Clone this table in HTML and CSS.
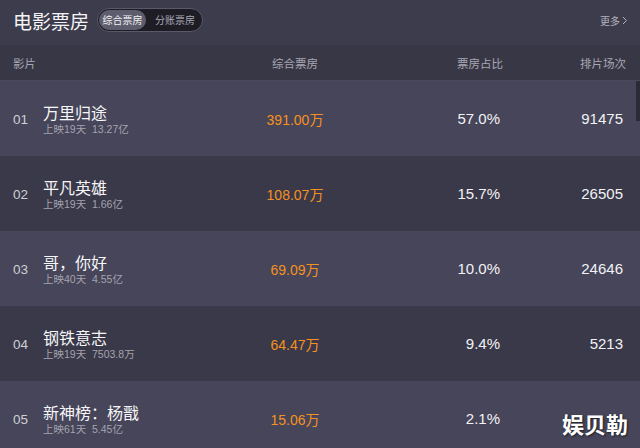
FILE: index.html
```html
<!DOCTYPE html>
<html lang="zh">
<head>
<meta charset="utf-8">
<link rel="stylesheet" href="styles.css">
</head>
<body>
<div class="page">
  <header class="top">
    <h1 class="title">电影票房</h1>
    <div class="pill">
      <span class="seg active">综合票房</span>
      <span class="seg">分账票房</span>
    </div>
    <a class="more">更多<svg width="6" height="9" viewBox="0 0 6 9"><path d="M1 1l3.5 3.5L1 8" fill="none" stroke="#b4b3bd" stroke-width="1"/></svg></a>
  </header>
  <div class="thead">
    <span class="c-rank">影片</span>
    <span class="c-film"></span>
    <span class="c-box">综合票房</span>
    <span class="c-pct">票房占比</span>
    <span class="c-cnt">排片场次</span>
  </div>
  <div class="tbody">
    <div class="row light">
      <span class="c-rank">01</span>
      <div class="c-film"><div class="name">万里归途</div><div class="sub">上映19天&nbsp;&nbsp;13.27亿</div></div>
      <span class="c-box val">391.00万</span>
      <span class="c-pct">57.0%</span>
      <span class="c-cnt">91475</span>
    </div>
    <div class="row dark">
      <span class="c-rank">02</span>
      <div class="c-film"><div class="name">平凡英雄</div><div class="sub">上映19天&nbsp;&nbsp;1.66亿</div></div>
      <span class="c-box val">108.07万</span>
      <span class="c-pct">15.7%</span>
      <span class="c-cnt">26505</span>
    </div>
    <div class="row light">
      <span class="c-rank">03</span>
      <div class="c-film"><div class="name">哥，你好</div><div class="sub">上映40天&nbsp;&nbsp;4.55亿</div></div>
      <span class="c-box val">69.09万</span>
      <span class="c-pct">10.0%</span>
      <span class="c-cnt">24646</span>
    </div>
    <div class="row dark">
      <span class="c-rank">04</span>
      <div class="c-film"><div class="name">钢铁意志</div><div class="sub">上映19天&nbsp;&nbsp;7503.8万</div></div>
      <span class="c-box val">64.47万</span>
      <span class="c-pct">9.4%</span>
      <span class="c-cnt">5213</span>
    </div>
    <div class="row light">
      <span class="c-rank">05</span>
      <div class="c-film"><div class="name">新神榜：杨戬</div><div class="sub">上映61天&nbsp;&nbsp;5.45亿</div></div>
      <span class="c-box val">15.06万</span>
      <span class="c-pct">2.1%</span>
      <span class="c-cnt"></span>
    </div>
  </div>
  <div class="thumb"></div>
  <div class="wm">娱贝勒</div>
</div>
</body>
</html>
```
FILE: styles.css
```css
* { box-sizing: border-box; }
html, body { margin: 0; padding: 0; }
body {
  width: 640px; height: 448px; overflow: hidden;
  background: #3c3b4b;
  font-family: "Liberation Sans", "Noto Sans CJK SC", sans-serif;
  color: #eeeef2;
}
.page { position: relative; width: 640px; height: 448px; overflow: hidden; }

.top {
  height: 45px;
  display: flex; align-items: center;
  padding: 0 12px 0 13px;
  background: #3d3c4c;
}
.title {
  margin: 0; font-size: 19px; font-weight: normal; color: #f4f4f6;
  font-family: "Noto Sans CJK SC", sans-serif; line-height: 1;
  margin-top: -5px;
}
.pill {
  margin-left: 8px; margin-top: -5px;
  display: flex; align-items: center;
  height: 24px; width: 106px;
  padding: 0 1px;
  background: #1e1d26;
  border: 1px solid #5a596a;
  border-radius: 12px;
}
.seg {
  font-family: "Noto Sans CJK SC", sans-serif;
  font-size: 10px; color: #a9a8b4;
  height: 20px; line-height: 20px;
  padding: 0 6px;
  white-space: nowrap;
}
.seg.active { background: #5e5d6e; color: #f2f2f4; border-radius: 10px; width: 51px; text-align: center; padding: 0; margin-right: 3px; }
.more {
  margin-left: auto; margin-top: -4px;
  font-family: "Noto Sans CJK SC", sans-serif;
  font-size: 10px; color: #b4b3bd;
  display: flex; align-items: center; gap: 2px;
}

.thead {
  height: 36px; display: flex; align-items: center;
  padding: 0 14px 0 13px;
  background: #383746;
  font-family: "Noto Sans CJK SC", sans-serif;
  font-size: 11.5px; color: #a8a7b2;
  border-bottom: 1px solid #4a4959;
}
.c-rank { width: 30px; flex: none; }
.c-film { width: 187px; flex: none; }
.c-box { width: 130px; flex: none; text-align: center; }
.c-pct { width: 140px; flex: none; text-align: right; }
.c-cnt { width: 123px; flex: none; text-align: right; }
.thead .c-pct { width: 143px; }

.tbody { display: flex; flex-direction: column; }
.row {
  height: 75px; display: flex; align-items: center;
  padding: 0 17px 0 13px;
}
.row.light { background: #464559; }
.row.dark { background: #3a3949; }
.row .c-rank { font-size: 13.5px; color: #cfcfd6; padding-top: 1px; }
.name {
  font-family: "Noto Sans CJK SC", sans-serif;
  font-size: 16px; line-height: 20px; color: #f6f6f8;
}
.sub {
  font-size: 10.5px; line-height: 14px; color: #a4a3ae;
}
.val { color: #f5911f; font-size: 14px; }
.row .c-pct, .row .c-cnt { font-size: 15px; color: #f2f2f5; }

.thumb {
  position: absolute; right: 0; top: 81px; width: 4px; height: 40px;
  background: #2b2a36;
}
.wm {
  position: absolute; right: 12px; bottom: 14px;
  font-family: "Noto Sans CJK SC", sans-serif;
  font-weight: bold; font-size: 22px; line-height: 1;
  color: #ffffff;
  text-shadow: 1px 1px 2px rgba(0,0,0,.6);
}
```
